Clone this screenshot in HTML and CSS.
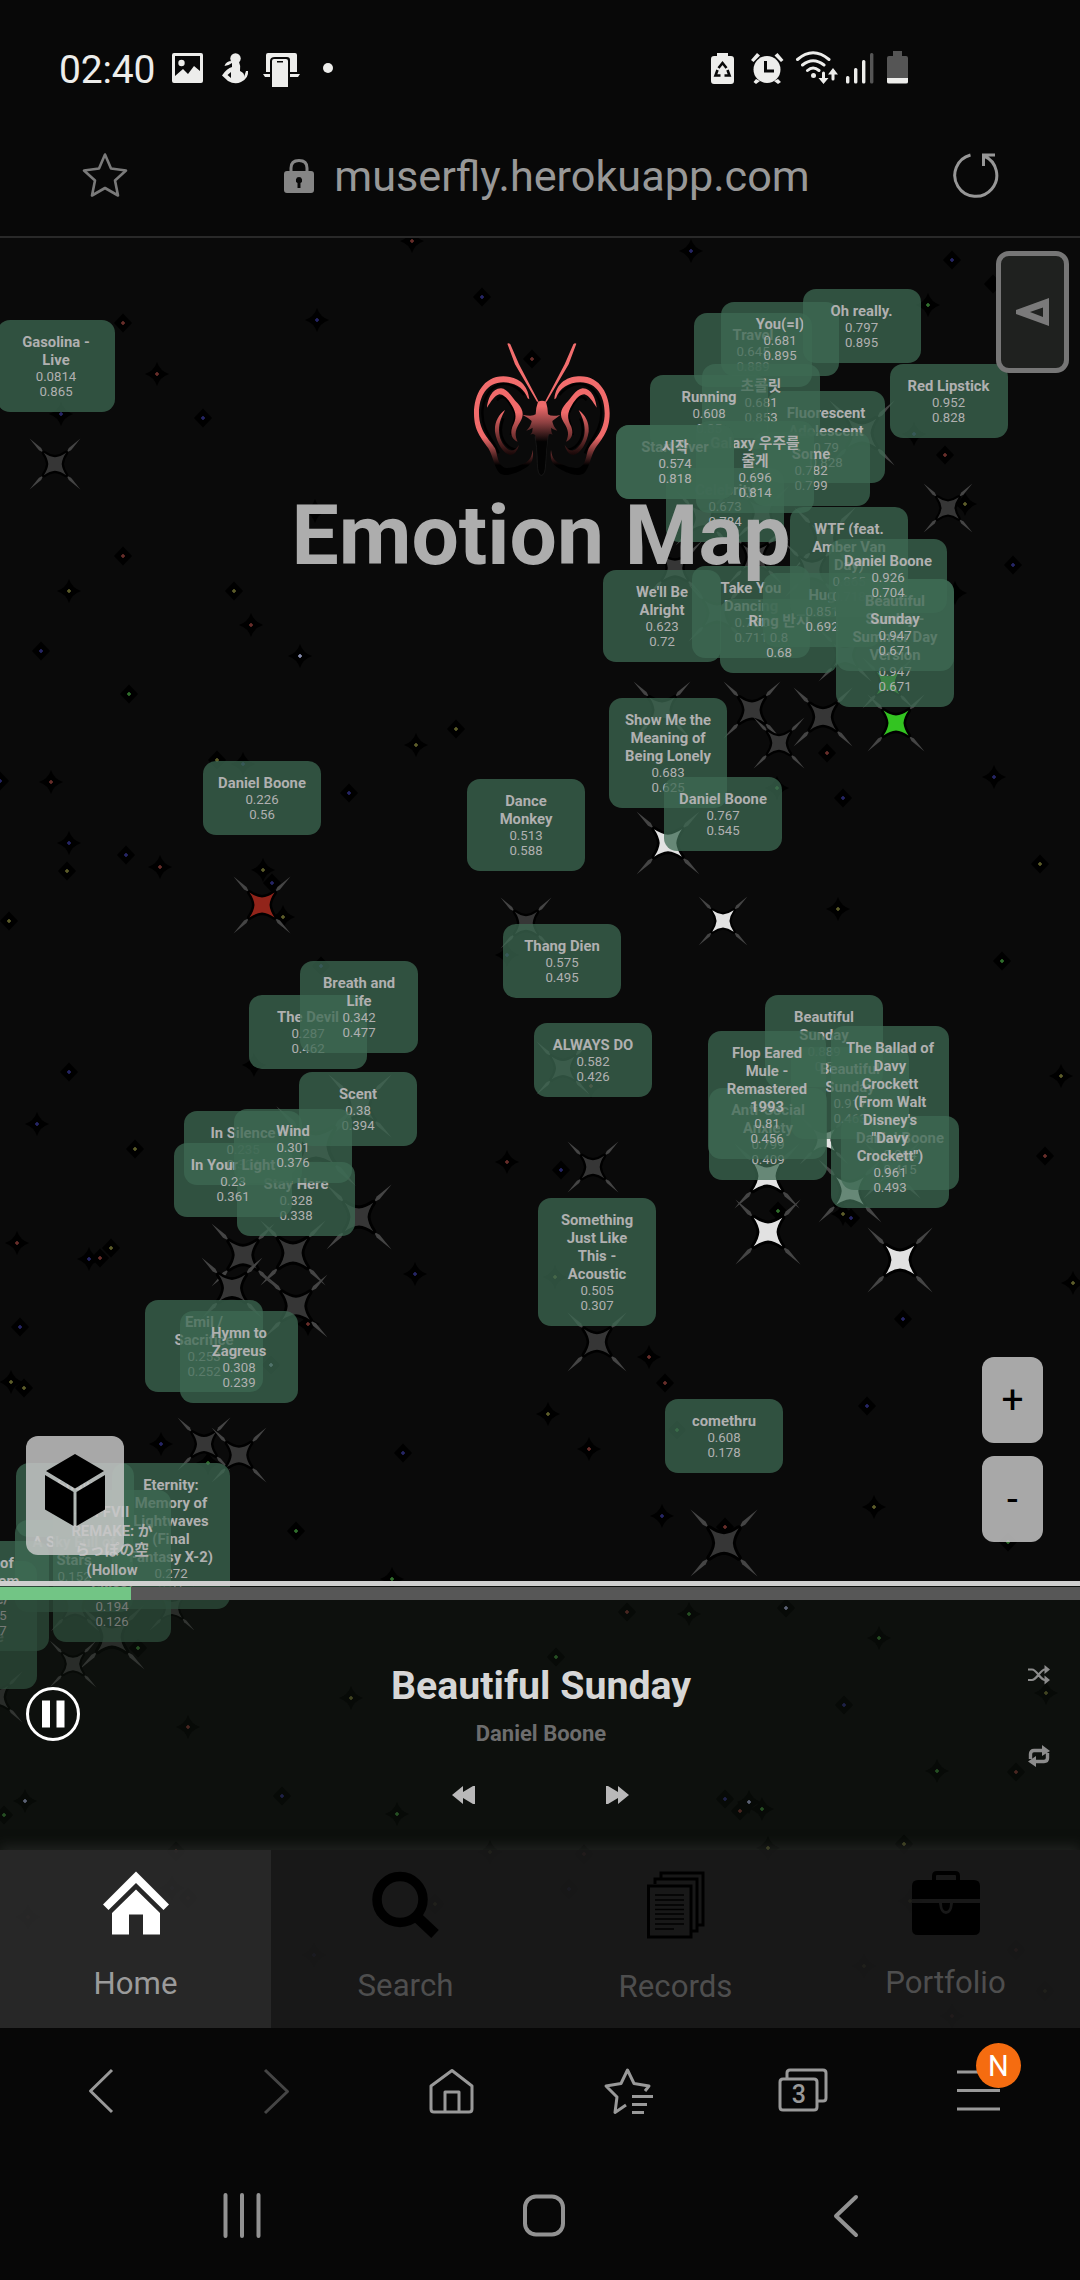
FILE: index.html
```html
<!DOCTYPE html>
<html lang="en">
<head>
<meta charset="utf-8">
<title>Emotion Map</title>
<link rel="stylesheet" href="styles.css">
</head>
<body>
<div class="screen">
  <div class="status-bar">
    <span class="clock">02:40</span>
    <svg class="status-left" viewBox="172 48 162 44" width="162" height="44">
      <g fill="#ededeb">
        <path fill-rule="evenodd" d="M174 53H201Q203 53 203 55V81Q203 83 201 83H174Q172 83 172 81V55Q172 53 174 53ZM175 56V76L183 69L188 74L194 66L200 71V56Z"/>
        <circle cx="181.500" cy="63" r="3.200"/>
        <circle cx="235.500" cy="58.500" r="5.200"/>
        <path d="M239 62Q241 66 240 71Q245 73 244 77L246 71H248Q249 78 241 82Q235 85 228 81L222 75.500Q227 68 232 67V63Q228 66 224.500 66Q226 61 232 61ZM231 72L227.500 75L231 78Z" fill-rule="evenodd"/>
        <path d="M268 53H295Q297 53 297 55V72H290V60Q290 57 287 57H275Q270 57 270 61V72H266V55Q266 53 268 53ZM263 74H270V77H265ZM290 74H300L298 77H290Z"/>
        <path fill-rule="evenodd" d="M274 59H286Q288 59 288 61V87H272V61Q272 59 274 59ZM277 61V62.500H283V61Z"/>
        <circle cx="328" cy="68" r="5"/>
      </g>
    </svg>
    <svg class="status-right" viewBox="708 48 204 44" width="204" height="44">
      <g fill="#ededeb">
        <path d="M717 53H728V56H731Q734 56 734 59V81Q734 84 731 84H714Q711 84 711 81V59Q711 56 714 56H717Z"/>
        <g fill="none" stroke="#080808" stroke-width="2.600"><path d="M718.500 68L722.500 63L726.500 68M727.500 70L729.500 75.500H724.500M720.500 75.500H715.500L717.500 70"/></g>
        <circle cx="767" cy="69.500" r="13.500"/>
        <path d="M751 60L757 53L760 55.500L753.500 62ZM783.500 60L777.500 53L774.500 55.500L781 62ZM756 79L753.500 82L756 84L760 81ZM778 79L781 82L778 84L774 81Z"/>
        <path d="M765.500 61V71H774" fill="none" stroke="#080808" stroke-width="3"/>
        <g fill="none" stroke="#ededeb" stroke-width="3" stroke-linecap="round"><path d="M797.500 59.500Q813 46 829 59.500M802.500 65Q813 56.500 824 65M807.500 70.500Q813 65.500 819 70.500M823.500 73V80M833 71V79"/></g>
        <circle cx="813.500" cy="75.500" r="2.500"/>
        <path d="M818.500 78H828.500L823.500 84ZM828 74.500H838L833 68Z"/>
        <rect x="846" y="76" width="3.400" height="7.500" rx="1.500"/><rect x="854" y="68" width="3.400" height="15.500" rx="1.500"/><rect x="862" y="60" width="3.400" height="23.500" rx="1.500"/>
        <rect x="870" y="53" width="3.400" height="30.500" rx="1.500" fill="#555"/>
        <path fill="#555" d="M893 51H902V56H906Q908 56 908 58V78H887V58Q887 56 889 56H893Z"/>
        <path d="M887 78H908V82Q908 83.500 906 83.500H889Q887 83.500 887 82Z"/>
      </g>
    </svg>
  </div>

  <div class="url-bar">
    <svg class="bookmark" viewBox="80 150 50 50" width="50" height="50"><path d="M105 154.500L111 168.500L126 170.500L115 180.500L118 195.500L105 188L92 195.500L95 180.500L84 170.500L99 168.500Z" fill="none" stroke="#7a7a7a" stroke-width="2.600" stroke-linejoin="round"/></svg>
    <div class="address">
      <svg viewBox="284 157 30 36" width="30" height="36"><path d="M291 172V167Q291 159.500 299 159.500Q307 159.500 307 167V172" fill="none" stroke="#858585" stroke-width="3"/><path fill-rule="evenodd" fill="#858585" d="M287 170H311Q314 170 314 173V189Q314 192 311 192H287Q284 192 284 189V173Q284 170 287 170ZM299 176A3.200 3.200 0 0 0 297.500 182V187H300.500V182A3.200 3.200 0 0 0 299 176Z"/></svg>
      <span>muserfly.herokuapp.com</span>
    </div>
    <svg class="reload" viewBox="950 150 50 50" width="50" height="50"><path d="M970.500 155A21 21 0 1 0 984 156M983.500 166V155H995" fill="none" stroke="#979797" stroke-width="3"/></svg>
  </div>

  <div class="app">
    <div class="map">
      <svg id="sky" viewBox="0 238 1080 1790" width="1080" height="1790">
        <defs>
          <symbol id="marker" viewBox="-30 -30 60 60" overflow="visible">
            <g class="rays"><path d="M28.500 -28.500L18 -15.500L13 -13L15.500 -18Z"/><path d="M28.500 28.500L18 15.500L13 13L15.500 18Z"/><path d="M-28.500 28.500L-18 15.500L-13 13L-15.500 18Z"/><path d="M-28.500 -28.500L-18 -15.500L-13 -13L-15.500 -18Z"/></g>
            <path stroke="#000" stroke-width="5" stroke-linejoin="round" paint-order="stroke" d="M-12.500 -12.500Q-6 -8 0 -7.500Q6 -8 12.500 -12.500Q8 -6 7.500 0Q8 6 12.500 12.500Q6 8 0 7.500Q-6 8 -12.500 12.500Q-8 6 -7.500 0Q-8 -6 -12.500 -12.500Z"/>
          </symbol>
        </defs>
      </svg>
      <div id="cards"></div>
    </div>

    <div class="overlay">
      <header class="hero">
        <svg class="logo" viewBox="0 0 465 465" width="155" height="155">
          <defs>
            <linearGradient id="wing" gradientUnits="userSpaceOnUse" x1="0" y1="0" x2="0" y2="465"><stop offset="0" stop-color="#f46f6f"/><stop offset=".66" stop-color="#f06a6a"/><stop offset=".84" stop-color="#000"/></linearGradient>
            <linearGradient id="ear" gradientUnits="userSpaceOnUse" x1="0" y1="0" x2="0" y2="465"><stop offset=".5" stop-color="#f06a6a"/><stop offset=".77" stop-color="#180808"/></linearGradient>
            <linearGradient id="thorax" gradientUnits="userSpaceOnUse" x1="0" y1="195" x2="0" y2="320"><stop offset=".15" stop-color="#f06a6a"/><stop offset=".55" stop-color="#8b3f40"/><stop offset="1" stop-color="#030303"/></linearGradient>
            <g id="half">
              <path fill="none" stroke="#000" stroke-width="7" d="M178 180C120 110 52 160 52 235C52 290 90 320 101 355M96 196C120 165 140 215 150 235C155 250 140 275 138 300M115 250C95 300 120 340 155 345"/>
              <path fill="url(#wing)" d="M127 26Q131 22 136 28L162 88L221 200H216L150 88ZM193 193C188 140 150 124 115 124C55 124 27 180 27 235C27 290 50 310 70 340C85 365 88 400 103 414C120 427 150 418 180 400C203 385 206 370 203 345C200 370 190 382 170 388C150 398 125 402 115 396C98 388 98 360 90 340C75 315 42 290 42 235C42 185 65 142 115 142C150 142 178 160 188 190Z"/>
              <path fill="url(#ear)" d="M66 218C68 195 80 160 108 160C130 162 142 190 158 205C175 225 178 240 165 262C150 285 148 300 158 320C145 315 133 300 142 275C155 250 155 235 140 210C128 190 115 178 103 178C88 182 78 200 66 218ZM120 225C100 240 88 262 90 290C95 325 115 355 135 360C150 360 158 345 162 330C150 348 140 350 128 342C112 328 102 310 102 285C102 262 110 245 120 225Z"/>
            </g>
          </defs>
          <use href="#half"/><use href="#half" transform="translate(461 0) scale(-1 1)"/>
          <path fill="url(#thorax)" stroke="#242424" stroke-width="1.500" d="M210 305Q216 330 217 385Q218 421 229 421Q241 421 242 385Q244 330 250 300Z"/>
          <path fill="url(#thorax)" d="M219 200Q231 194 243 200Q248 216 249 238Q260 246 286 240Q270 252 262 258Q263 272 277 287Q262 282 258 278Q258 290 263 299Q250 292 247 310L240 385Q238 402 229 402Q222 402 221 385L214 310Q210 292 196 299Q204 290 203 278Q195 284 184 287Q199 272 200 258Q190 248 172 239Q202 246 212 238Q213 216 219 200Z"/>
        </svg>
        <h1>Emotion Map</h1>
      </header>

      <section class="player">
        <div class="edge"></div>
        <div class="progress"><div class="progress-fill"></div></div>
        <div class="player-body">
          <svg class="pause" viewBox="0 0 56 56" width="56" height="56"><circle cx="28" cy="28" r="25.500" fill="none" stroke="#fff" stroke-width="3"/><path fill="#fff" d="M17 14.500h8v27h-8zM31.500 14.500h8v27h-8z"/></svg>
          <div class="track">
            <div class="track-title">Beautiful Sunday</div>
            <div class="track-artist">Daniel Boone</div>
            <div class="skip">
              <svg viewBox="0 0 24 18" width="24" height="18"><path fill="#b9b9b9" d="M0 9L11 0V6L21 0H23V18H21L11 12V18Z"/></svg>
              <svg viewBox="0 0 24 18" width="24" height="18"><path fill="#b9b9b9" d="M24 9L13 0V6L3 0H1V18H3L13 12V18Z"/></svg>
            </div>
          </div>
          <div class="modes">
            <svg viewBox="0 0 22 20" width="22" height="20"><path d="M0 4.500H4C9 4.500 12 15 17 15H19M0 15H4C9 15 12 4.500 17 4.500H19" fill="none" stroke="#8c8c8c" stroke-width="2.200"/><path fill="#8c8c8c" d="M16.500 0L22 4.500L16.500 9ZM16.500 10.500L22 15L16.500 19.500Z"/></svg>
            <svg viewBox="0 0 22 22" width="22" height="22"><path d="M2.500 14V9Q2.500 5.500 6 5.500H15M19.500 8V13Q19.500 16.500 16 16.500H7" fill="none" stroke="#8c8c8c" stroke-width="3.400"/><path fill="#8c8c8c" d="M14 0L22 6L14 11ZM8 11L0 16.500L8 22Z"/></svg>
          </div>
        </div>
      </section>

      <nav class="tabs">
        <a class="tab active">
          <svg viewBox="0 0 66 63" width="66" height="63"><path fill="#fff" d="M33 0L66 33L60.500 38.500L33 11.500L5.500 38.500L0 33ZM33 18L57 41.500V63H40V43H26V63H9V41.500Z"/></svg>
          <span>Home</span>
        </a>
        <a class="tab search">
          <svg viewBox="0 0 68 66" width="68" height="66"><circle cx="28" cy="27.500" r="23" fill="none" stroke="#000" stroke-width="9.500"/><path d="M46 46L63 62" stroke="#000" stroke-width="11"/></svg>
          <span>Search</span>
        </a>
        <a class="tab records">
          <svg viewBox="0 0 58 68" width="58" height="68" fill="none" stroke="#000" stroke-width="3"><path d="M14 7V2H56V54H51M8 13V8H50V60H45M1.500 15H44V66H1.500Z"/><path stroke-width="1.600" d="M8 24H37M8 29H37M8 34H37M8 38.500H37M8 43H37M8 48H37M8 53H37M8 58H27"/></svg>
          <span>Records</span>
        </a>
        <a class="tab portfolio">
          <svg viewBox="0 0 68 64" width="68" height="64"><path d="M22 10V5Q22 2 25 2H43Q46 2 46 5V10" fill="none" stroke="#000" stroke-width="4"/><path d="M6 9H62Q68 9 68 15V28H0V15Q0 9 6 9ZM0 32H27Q28 43 34 43Q40 43 41 32H68V58Q68 64 62 64H6Q0 64 0 58ZM30 32H38Q38 40 34 40Q30 40 30 32Z"/></svg>
          <span>Portfolio</span>
        </a>
      </nav>
    </div>

    <button class="drawer"><svg viewBox="0 0 33 28" width="33" height="28"><path fill="#7a7a7a" fill-rule="evenodd" d="M0 12L33 0V28L0 16ZM14 14L27 19V9.500Z"/></svg></button>
    <button class="cube"><svg viewBox="0 0 60 72" width="60" height="72"><path d="M30 0L59 17L30 34.500L1 17ZM0 21L28.500 38V72L0 55.500ZM60 21L31.500 38V72L60 55.500Z"/></svg></button>
    <div class="zoom"><button>+</button><button>-</button></div>
  </div>

  <div class="browser-nav">
    <svg viewBox="75 2060 52 60" width="52" height="60"><path d="M112 2070L90.500 2091L112 2112" class="line"/></svg>
    <svg viewBox="251 2060 52 60" width="52" height="60"><path d="M265 2070L287.500 2091.500L265 2113" class="line dim"/></svg>
    <svg viewBox="426 2060 52 60" width="52" height="60"><path d="M452 2070.500L472 2086V2109Q472 2112 469 2112H434Q431 2112 431 2109V2086ZM445 2112V2092H459V2112" class="line"/></svg>
    <svg viewBox="602 2060 52 60" width="52" height="60"><path d="M626 2105L615 2112.500L617 2097L606 2086L621 2083.500L627.500 2070L634 2083.500L649 2086L645 2091" class="line"/><path d="M632 2096.500H653M632 2104.500H647M632 2112.500H644" class="line"/></svg>
    <div class="tab-count"><svg viewBox="777 2060 52 60" width="52" height="60"><path d="M787 2079V2073Q787 2070 790 2070H823Q826 2070 826 2073V2098Q826 2101 823 2101H818M780 2082Q780 2079 783 2079H814Q817 2079 817 2082V2107Q817 2110 814 2110H783Q780 2110 780 2107Z" class="line"/></svg><span>3</span></div>
    <div class="menu"><svg viewBox="953 2060 52 60" width="52" height="60"><path d="M957 2072H1000M957 2090.500H1000M957 2109H1000" class="line"/></svg><span class="badge">N</span></div>
  </div>
  <div class="system-nav">
    <svg viewBox="0 0 50 50" width="50" height="50"><path d="M8.500 4V45M25 4V45M41.500 4V45" class="sys"/></svg>
    <svg viewBox="0 0 50 50" width="50" height="50"><rect x="6" y="5.500" width="38" height="38" rx="11" class="sys"/></svg>
    <svg viewBox="0 0 50 50" width="50" height="50"><path d="M35 6L15 25L35 44" class="sys"/></svg>
  </div>
</div>
<script src="script.js"></script>
</body>
</html>
```
FILE: styles.css
```css
* { box-sizing: border-box; }
body {
  margin: 0;
  background: #070707;
  font-family: Roboto, "Noto Sans CJK KR", "Noto Sans CJK JP", sans-serif;
}
button { font: inherit; margin: 0; padding: 0; border: 0; }
svg { display: block; flex: none; }
.screen { width: 1080px; height: 2280px; display: flex; flex-direction: column; overflow: hidden; background: #080808; }

.status-bar { height: 120px; padding: 0 168px 0 59px; display: flex; align-items: flex-start; }
.clock { font-size: 39px; line-height: 46px; margin-top: 47px; width: 113px; color: #ededeb; letter-spacing: -.2px; white-space: nowrap; }
.status-left { margin-top: 48px; }
.status-right { margin: 48px 0 0 auto; }

.url-bar { height: 118px; padding: 30px 80px 0; display: flex; justify-content: space-between; align-items: flex-start; border-bottom: 2px solid #292929; }
.address { display: flex; align-items: center; gap: 20px; height: 52px; margin-left: 14px; font-size: 43.2px; color: #989898; white-space: nowrap; }

.app { position: relative; height: 1790px; background: #0a0a0a; overflow: hidden; }
.map { position: absolute; inset: 0; }
.rays { fill: #454545; stroke: none; }
.card {
  position: absolute;
  width: 118px;
  padding: 13px 10px;
  border-radius: 13px;
  background: rgba(62, 106, 83, .75);
  color: #b0b0b0;
  text-align: center;
  font-size: 13.2px;
  line-height: 15px;
  white-space: nowrap;
}
.card b { display: block; font-size: 14.8px; line-height: 18px; }
.card.tall b { line-height: 19.2px; }

.overlay { position: relative; height: 100%; display: flex; flex-direction: column; }
.hero { flex: 1; display: flex; flex-direction: column; align-items: center; padding-top: 97px; }
.logo { margin-left: 5px; }
.hero h1 { margin: -3px 0 0 2px; font-size: 84px; line-height: 98px; font-weight: 700; color: #adadad; white-space: nowrap; }

.player { height: 269px; background: rgba(20, 26, 20, .37); }
.edge { height: 5px; margin-bottom: 1px; background: #cfcfcf; }
.progress { height: 13px; background: #575757; }
.progress-fill { width: 131px; height: 100%; background: #72c585; }
.player-body { height: 250px; display: flex; justify-content: space-between; padding: 0 30px 0 25px; }
.pause { margin-top: 86px; }
.track { display: flex; flex-direction: column; align-items: center; margin-left: 7px; }
.track-title { margin: 63px 0 0; font-size: 39.3px; line-height: 46px; font-weight: 700; color: #d6d6d6; }
.track-artist { margin: 12px 0 0; font-size: 22px; line-height: 26px; font-weight: 700; color: #6d6d6d; }
.skip { display: flex; gap: 129px; margin-top: 39px; }
.modes { display: flex; flex-direction: column; gap: 60px; padding-top: 65px; width: 22px; margin-left: 34px; }

.tabs { position: relative; height: 178px; display: grid; grid-template-columns: 271px 269px 271px 269px; background: rgba(25, 25, 25, .9); box-shadow: 0 -3px 12px rgba(50, 52, 50, .6); }
.tab { display: flex; flex-direction: column; align-items: center; font-size: 31.2px; line-height: 38px; color: #4e4e4e; padding-top: 21px; }
.tab svg { height: 68px; }
.tab span { margin-top: 28px; }
.tab.active { background: rgba(45, 45, 45, .7); color: #9b9b9b; }
.tab.active svg, .tab.portfolio svg { height: 64px; }
.tab.active span { margin-top: 30px; }
.tab.records span { margin-top: 29px; }
.tab.portfolio span { margin-top: 29px; }

.drawer { position: absolute; left: 996px; top: 13px; width: 73px; height: 122px; border: 5px solid #767676; border-radius: 13px; background: rgba(33, 35, 33, .95); display: grid; place-items: center; }
.cube { position: absolute; left: 26px; top: 1198px; width: 98px; height: 119px; border-radius: 12px; background: rgba(201, 201, 201, .83); display: grid; place-items: center; padding-bottom: 11px; }
.zoom { position: absolute; right: 37px; top: 1119px; display: flex; flex-direction: column; gap: 13px; }
.zoom button { width: 61px; height: 86px; border-radius: 12px; background: rgba(201, 201, 201, .83); color: #000; font-size: 39px; }

.browser-nav { height: 132px; padding: 32px 75px 0; display: flex; justify-content: space-between; background: #070707; color: #999; }
.line { fill: none; stroke: #999; stroke-width: 3; stroke-linejoin: round; }
.dim { stroke: #454545; }
.tab-count, .menu { position: relative; height: 60px; }
.tab-count span { position: absolute; left: 3px; top: 21px; width: 37px; text-align: center; font-size: 25px; line-height: 28px; font-weight: 500; }
.badge { position: absolute; left: 23px; top: -17px; width: 45px; height: 45px; border-radius: 50%; background: #f56c10; color: #fff; font-size: 29px; line-height: 46px; text-align: center; }
.system-nav { height: 120px; padding: 31px 209px 0 217px; display: flex; justify-content: space-between; background: #070707; }
.sys { fill: none; stroke: #929292; stroke-width: 4; stroke-linecap: round; stroke-linejoin: round; }
```
FILE: script.js
```js
const TOP = 238;
const NS = 'http://www.w3.org/2000/svg';
const sky = document.getElementById('sky');

// x, y, half size, fill of a track marker
const gray = '#363636', white = '#e2e2e2', green = '#33c421', red = '#92241a';
const markers = [
  [55,464,25,gray],[862,433,32,gray],[948,508,24,gray],[675,568,27,gray],[703,518,27,gray],[762,513,27,gray],
  [755,557,27,gray],[825,538,30,gray],[812,570,27,gray],[717,613,28,gray],[845,655,26,gray],[752,710,28,gray],[779,743,25,gray],
  [823,717,29,gray],[888,683,25,green],[896,723,28,green],[662,710,28,gray],[668,843,31,white],[723,921,24,white],
  [262,905,28,red],[526,923,25,gray],[563,1068,26,gray],[593,1167,25,gray],[360,1106,31,gray],[316,1146,39,gray],
  [359,1217,32,gray],[243,1255,31,gray],[293,1253,32,gray],[232,1288,30,gray],[296,1306,31,gray],[597,1342,29,gray],
  [767,1176,32,white],[768,1232,32,white],[824,1140,24,white],[850,1191,31,white],[892,1170,28,gray],[900,1260,32,white],
  [724,1543,33,gray],[204,1444,26,gray],[239,1455,27,gray],[112,1637,32,gray],[73,1664,23,gray],[172,1608,22,gray],
  [75,1607,24,gray],[-3,1697,25,gray]
];

// x, y, tint of a background star
const tints = { r: '#6e302c', b: '#28286c', y: '#62622c', g: '#33752f', w: '#8f95b8', k: '#000' };
const dots = `412,241,r 482,297,b 317,320,b 123,323,r 157,374,r 532,359,r 61,414,b 203,418,b 315,511,k 123,556,r
69,591,y 234,591,y 251,625,r 41,651,b 300,656,w 129,694,g 691,251,b 952,260,b 928,305,g 993,284,k 914,434,b 945,455,r
965,504,y 1013,565,b 955,593,k 827,753,r 994,777,b 843,798,b 777,788,g 1040,864,y 838,909,y 217,760,y 243,764,b 456,729,y
416,745,y 0,781,b 51,782,r 349,793,b 69,843,b 126,855,b 160,867,r 67,871,y 263,870,y 272,883,b 283,917,y 9,921,y 507,955,b
321,966,b 254,1065,k 69,1072,b 37,1124,b 135,1149,y 507,1162,r 561,1170,b 17,1243,r 111,1248,y 89,1259,b 100,1258,r
415,1274,b 1002,961,g 1061,1076,y 1045,1156,r 591,1086,r 778,1211,g 843,1214,y 851,1218,b 1073,1283,y 903,1319,b
649,1357,r 665,1383,r 548,1414,y 867,1406,b 589,1449,r 677,1430,g 662,1516,b 725,1527,r 874,1507,y 1008,1542,g 555,1277,y
20,1327,b 11,1382,y 24,1388,y 308,1324,r 271,1365,w 161,1444,b 403,1453,b 208,1463,g 296,1531,g 392,1579,g 138,1648,g
351,1698,y 627,1612,r 689,1614,g 786,1608,w 879,1638,g 556,1657,g 188,1727,r 844,1705,b 1046,1693,y 1016,1772,r
937,1771,g 282,1796,b 25,1801,w 4,1815,g 397,1814,g 725,1799,b 749,1802,w 740,1811,r 762,1809,g 176,1851,r 490,1852,y
584,1854,r 768,1848,y 904,1844,y 172,1888,b 188,1898,r 28,1917,r 435,1904,y 314,1955,b 569,1889,b 910,1901,y 1016,1950,r
864,1966,y 1045,1991,y 952,2016,r`.split(/\s+/);

function add(name, attrs) {
  const el = document.createElementNS(NS, name);
  for (const key in attrs) el.setAttribute(key, attrs[key]);
  sky.appendChild(el);
}

dots.forEach((dot, i) => {
  const [x, y, tint] = dot.split(',');
  const d = i % 2
    ? 'M0 -9.5L9 0L0 9.500L-9 0Z'
    : 'M0 -12Q3 -3 12 0Q3 3 0 12Q-3 3 -12 0Q-3 -3 0 -12Z';
  add('path', { d, transform: `translate(${x} ${y})`, fill: '#000' });
  add('path', { d: 'M0 -2V2M-2 0H2', transform: `translate(${x} ${y})`, stroke: tints[tint], 'stroke-width': 1.5 });
});
markers.forEach(([x, y, r, fill]) => {
  const s = r * 30 / 28;
  add('use', { href: '#marker', x: x - s, y: y - s, width: 2 * s, height: 2 * s, fill });
});

// left, top, title lines, valence, energy; later entries are painted on top
const cards = [
  [-3,320,'Gasolina -|Live','0.0814','0.865'],
  [694,313,'Travel','0.645','0.889'],
  [721,302,'You(=I)','0.681','0.895'],
  [802.5,289,'Oh really.','0.797','0.895'],
  [889.5,364,'Red Lipstick','0.952','0.828'],
  [767,391,'Fluorescent|Adolescent','0.79','0.828'],
  [702,364,'초콜릿','0.681','0.853'],
  [650,375,'Running','0.608','0.85'],
  [752,432,'Some','0.782','0.799'],
  [666,468,'Celebrity','0.673','0.784'],
  [696,421,'Galaxy 우주를|줄게','0.696','0.814'],
  [616,425,'Start Over','0.574','0.818'],
  [616,425,'시작','0.574','0.818'],
  [603,570,"We'll Be|Alright",'0.623','0.72'],
  [692,566,'Take You|Dancing','0.762','0.711'],
  [720,599,'Ring 반지','0.8','0.68'],
  [763,573,'Hug','0.851','0.692'],
  [790,507,'WTF (feat.|Amber Van|Day)','0.865','0.718'],
  [836,579,'Beautiful|Sunday -|Summer Day|Version','0.947','0.671'],
  [836,579,'Beautiful|Sunday','0.947','0.671'],
  [829,539,'Daniel Boone','0.926','0.704'],
  [609,698,'Show Me the|Meaning of|Being Lonely','0.683','0.625'],
  [664,777,'Daniel Boone','0.767','0.545'],
  [203,761,'Daniel Boone','0.226','0.56'],
  [467,779,'Dance|Monkey','0.513','0.588'],
  [503,924,'Thang Dien','0.575','0.495'],
  [249,995,'The Devil','0.287','0.462'],
  [300,961,'Breath and|Life','0.342','0.477'],
  [534,1023,'ALWAYS DO','0.582','0.426'],
  [299,1072,'Scent','0.38','0.394'],
  [184,1111,'In Silence','0.235','0.384'],
  [237,1162,'Stay Here','0.328','0.338'],
  [174,1143,'In Your Light','0.23','0.361'],
  [234,1109,'Wind','0.301','0.376'],
  [538,1198,'Something|Just Like|This -|Acoustic','0.505','0.307'],
  [765,995,'Beautiful|Sunday','0.889','0.5'],
  [791,1047,'Beautiful|Sunday','0.917','0.463'],
  [709,1088,'Anti-Social|Anxiety','0.799','0.409'],
  [708,1031,'Flop Eared|Mule -|Remastered|1993','0.81','0.456'],
  [841,1116,'Daniel Boone','0.964','0.415'],
  [831,1026,'The Ballad of|Davy|Crockett|(From Walt|Disney\'s|"Davy|Crockett")','0.961','0.493'],
  [665,1399,'comethru','0.608','0.178'],
  [145,1300,'Emil /|Sacrifice','0.253','0.252'],
  [180,1311,'Hymn to|Zagreus','0.308','0.239'],
  [112,1463,'Eternity:|Memory of|Lightwaves|(Final|Fantasy X-2)','0.272','0.21'],
  [16,1463,'Snow','0.17','0.19'],
  [15,1520,'A Sky Full of|Stars','0.152','0.16'],
  [-81,1561,'A|New|Day|Prelude','0.08','0.09'],
  [-69,1541,'Rest of|Freedom|(Live/','0.125','0.107'],
  [53,1490,'FFVII|REMAKE: か|らっぽの空|(Hollow|Skies)','0.194','0.126','tall']
];

const layer = document.getElementById('cards');
cards.forEach(([x, y, title, valence, energy, extra]) => {
  const card = document.createElement('div');
  card.className = extra ? 'card ' + extra : 'card';
  card.style.left = x + 'px';
  card.style.top = y - TOP + 'px';
  title.split('|').forEach(line => {
    const b = document.createElement('b');
    b.textContent = line;
    card.appendChild(b);
  });
  [valence, energy].forEach(value => {
    const row = document.createElement('div');
    row.textContent = value;
    card.appendChild(row);
  });
  layer.appendChild(card);
});
```
